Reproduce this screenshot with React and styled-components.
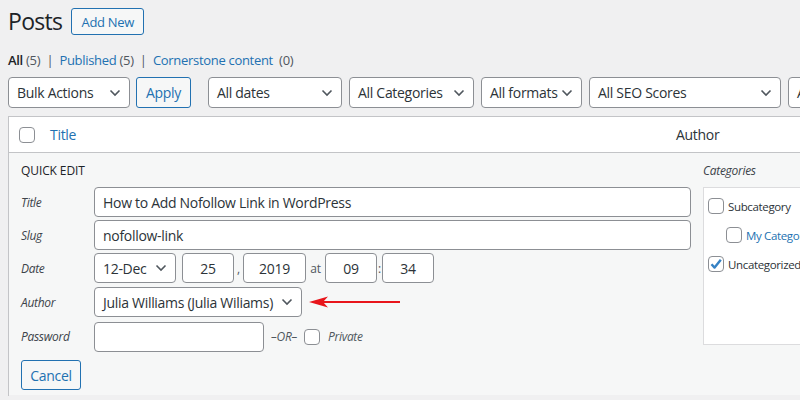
import React from "react";
import styled, { createGlobalStyle } from "styled-components";

const Global = createGlobalStyle`
  html, body { margin: 0; padding: 0; background: #f0f0f1; }
  body { font-family: "Open Sans", "Noto Sans", sans-serif; color: #1d2327; font-size: 13px; letter-spacing: -0.3px; }
  * { box-sizing: border-box; }
`;

const Page = styled.div`
  width: 800px;
  height: 400px;
  overflow: hidden;
  padding-left: 8px;
`;

const Head = styled.div`
  display: flex;
  align-items: center;
  gap: 8px;
  height: 42px;
  padding-top: 1px;
`;

const H1 = styled.h1`
  margin: 0 1px 0 0;
  font-size: 23px;
  font-weight: 400;
  color: #1d2327;
  line-height: 1;
  letter-spacing: -0.7px;
`;

const Btn = styled.button`
  font-family: inherit;
  letter-spacing: inherit;
  font-size: ${(p) => p.$fs || 13}px;
  color: #2271b1;
  background: #f6f7f7;
  border: 1px solid #2271b1;
  border-radius: 3px;
  height: ${(p) => p.$h || 30}px;
  width: ${(p) => p.$w}px;
  padding: 0;
  flex: none;
`;

const Subsub = styled.div`
  display: flex;
  align-items: center;
  margin-top: 10px;
  height: 16px;
  font-size: 13px;
  color: #50575e;
  white-space: pre;
`;

const Cur = styled.span`
  color: #1d2327;
  font-weight: 600;
`;
const Link = styled.span`
  color: #2271b1;
`;

const Toolbar = styled.div`
  display: flex;
  align-items: center;
  margin-top: 9px;
  height: 31px;
  white-space: nowrap;
`;

const SelectBox = styled.div`
  flex: none;
  display: flex;
  align-items: center;
  justify-content: space-between;
  width: ${(p) => p.$w}px;
  height: ${(p) => p.$h || 31}px;
  margin-right: ${(p) => p.$mr || 0}px;
  padding: 0 8px 0 8px;
  background: #fff;
  border: 1px solid #8c8f94;
  border-radius: 4px;
  font-size: 14px;
  color: #2c3338;
  white-space: nowrap;
  overflow: hidden;
`;

const Chevron = () => (
  <svg width="12" height="8" viewBox="0 0 12 8" style={{ flex: "none" }}>
    <polyline points="1.5,1.5 6,6 10.5,1.5" fill="none" stroke="#50575e" strokeWidth="1.6" />
  </svg>
);

const Select = ({ w, mr, h, children }) => (
  <SelectBox $w={w} $mr={mr} $h={h}>
    <span>{children}</span>
    <Chevron />
  </SelectBox>
);

const Table = styled.div`
  margin-top: 8px;
  width: 900px;
  border-left: 1px solid #c3c4c7;
  border-top: 1px solid #c3c4c7;
  background: #fff;
`;

const HeaderRow = styled.div`
  display: flex;
  align-items: center;
  height: 36px;
  border-bottom: 1px solid #c3c4c7;
  font-size: 14px;
`;

const Check = styled.span`
  flex: none;
  display: inline-flex;
  align-items: center;
  justify-content: center;
  width: 16px;
  height: 16px;
  border: 1px solid #8c8f94;
  border-radius: 4px;
  background: #fff;
  margin-left: ${(p) => p.$ml || 0}px;
  margin-right: ${(p) => p.$mr || 0}px;
`;

const CheckMark = () => (
  <svg width="14" height="14" viewBox="0 0 14 14">
    <path d="M2.5 7.2 L5.6 10.6 L11.8 2.8" fill="none" stroke="#3582c4" strokeWidth="2.4" strokeLinejoin="round" />
  </svg>
);

const TitleCol = styled.span`
  color: #2271b1;
  width: 626px;
  flex: none;
`;

const AuthorCol = styled.span`
  color: #2c3338;
`;

const QuickRow = styled.div`
  display: flex;
  background: #f6f7f7;
  height: 243px;
  padding: 10px 0 0 12px;
  border-bottom: 1px solid #f0f0f1;
`;

const LeftCol = styled.div`
  width: 682px;
  flex: none;
`;

const Legend = styled.div`
  font-size: 12px;
  text-transform: uppercase;
  color: #1d2327;
  height: 24px;
  line-height: 16px;
  font-weight: 500;
  letter-spacing: -0.1px;
`;

const Fields = styled.div`
  display: flex;
  flex-direction: column;
  gap: 4px;
`;

const Field = styled.div`
  display: flex;
  align-items: center;
  height: ${(p) => p.$h || 30}px;
`;

const Label = styled.span`
  width: 73px;
  flex: none;
  font-style: italic;
  font-size: 12px;
  color: #3c434a;
`;

const Input = styled.div`
  flex: none;
  display: flex;
  align-items: center;
  justify-content: ${(p) => (p.$center ? "center" : "flex-start")};
  width: ${(p) => p.$w}px;
  height: 30px;
  padding: 0 8px;
  background: #fff;
  border: 1px solid #8c8f94;
  border-radius: 4px;
  font-size: 14px;
  color: #2c3338;
  white-space: nowrap;
`;

const Sep = styled.span`
  flex: none;
  width: ${(p) => (p.$w ? `${p.$w}px` : "auto")};
  text-align: center;
  font-size: ${(p) => p.$fs || 12}px;
  color: #50575e;
  font-style: ${(p) => (p.$it ? "italic" : "normal")};
`;

const Arrow = () => (
  <svg width="94" height="14" viewBox="0 0 94 14" style={{ marginLeft: 6, flex: "none" }}>
    <line x1="10" y1="7" x2="92" y2="7" stroke="#e8151b" strokeWidth="2.2" />
    <path d="M1 7 L20 1.5 L15 7 L20 12.5 Z" fill="#e8151b" />
  </svg>
);

const RightCol = styled.div`
  flex: none;
  width: 200px;
`;

const CatLabel = styled.div`
  font-style: italic;
  font-size: 12px;
  color: #3c434a;
  height: 24px;
  line-height: 16px;
`;

const CatBox = styled.div`
  width: 200px;
  height: 158px;
  background: #fff;
  border: 1px solid #dcdcde;
  padding: 10px 0 0 4px;
  display: flex;
  flex-direction: column;
  gap: 13px;
`;

const CatItem = styled.div`
  display: flex;
  align-items: center;
  height: 16px;
  padding-left: ${(p) => p.$indent || 0}px;
  font-size: 11.5px;
  letter-spacing: -0.35px;
  color: ${(p) => (p.$blue ? "#2271b1" : "#2c3338")};
  white-space: nowrap;
`;

const Actions = styled.div`
  margin-top: 8px;
`;

export default function App() {
  return (
    <Page>
      <Global />
      <Head>
        <H1>Posts</H1>
        <Btn $w={73} $h={27} $fs={13}>Add New</Btn>
      </Head>
      <Subsub>
        <Cur>All</Cur> (5)  |  <Link>Published</Link> (5)  |  <Link>Cornerstone content</Link>  (0)
      </Subsub>
      <Toolbar>
        <Select w={122} mr={6}>Bulk Actions</Select>
        <Btn $w={55} $h={31} $fs={14} style={{ marginRight: 17 }}>Apply</Btn>
        <Select w={134} mr={7}>All dates</Select>
        <Select w={125} mr={7}>All Categories</Select>
        <Select w={101} mr={7}>All formats</Select>
        <Select w={192} mr={7}>All SEO Scores</Select>
        <Select w={100}>All</Select>
      </Toolbar>
      <Table>
        <HeaderRow>
          <Check $ml={10} $mr={15} />
          <TitleCol>Title</TitleCol>
          <AuthorCol>Author</AuthorCol>
        </HeaderRow>
        <QuickRow>
          <LeftCol>
            <Legend>Quick Edit</Legend>
            <Fields>
              <Field>
                <Label>Title</Label>
                <Input $w={597}>How to Add Nofollow Link in WordPress</Input>
              </Field>
              <Field $h={28}>
                <Label>Slug</Label>
                <Input $w={597}>nofollow-link</Input>
              </Field>
              <Field>
                <Label>Date</Label>
                <SelectBox $w={82} $h={30}>
                  <span>12-Dec</span>
                  <Chevron />
                </SelectBox>
                <Sep $w={6} />
                <Input $w={52} $center>25</Input>
                <Sep $w={9}>,</Sep>
                <Input $w={63} $center>2019</Input>
                <Sep $w={19}>at</Sep>
                <Input $w={52} $center>09</Input>
                <Sep $w={5}>:</Sep>
                <Input $w={52} $center>34</Input>
              </Field>
              <Field>
                <Label>Author</Label>
                <SelectBox $w={208} $h={30}>
                  <span>Julia Williams (Julia Wiliams)</span>
                  <Chevron />
                </SelectBox>
                <Arrow />
              </Field>
              <Field $h={31}>
                <Label>Password</Label>
                <Input $w={170} />
                <Sep $w={40} $it>–OR–</Sep>
                <Check $mr={8} />
                <Sep $it>Private</Sep>
              </Field>
            </Fields>
            <Actions>
              <Btn $w={60} $h={30} $fs={14}>Cancel</Btn>
            </Actions>
          </LeftCol>
          <RightCol>
            <CatLabel>Categories</CatLabel>
            <CatBox>
              <CatItem>
                <Check $mr={4} />Subcategory
              </CatItem>
              <CatItem $indent={18} $blue>
                <Check $mr={4} />My Category
              </CatItem>
              <CatItem>
                <Check $mr={4}><CheckMark /></Check>Uncategorized
              </CatItem>
            </CatBox>
          </RightCol>
        </QuickRow>
      </Table>
    </Page>
  );
}
